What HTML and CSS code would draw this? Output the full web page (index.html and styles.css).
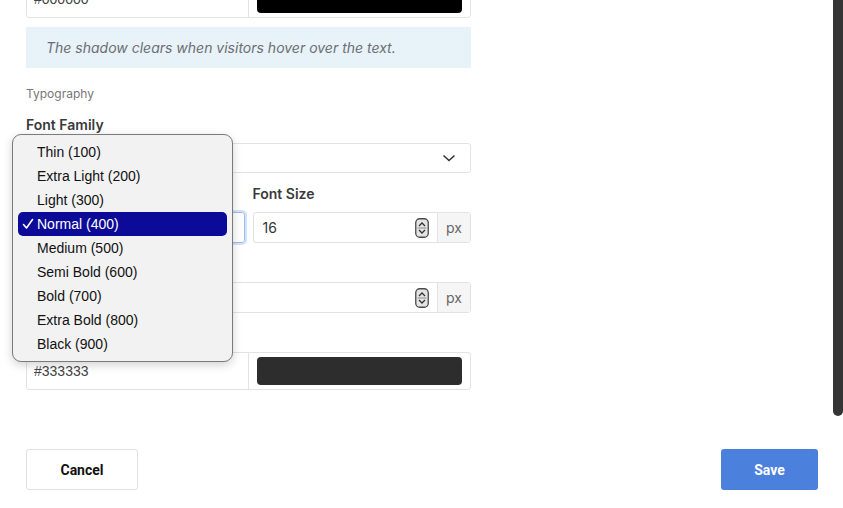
FILE: index.html
```html
<!DOCTYPE html>
<html lang="en">
<head>
  <meta charset="UTF-8" />
  <title>Text Style</title>
  <link rel="stylesheet" href="styles.css">
</head>
<body>
  <div id="panel">
    <div class="form">
      <div class="color-row first">
        <input type="text" class="color-text" value="#000000" />
        <div class="swatch-box"><div class="swatch black"></div></div>
      </div>

      <div class="info">The shadow clears when visitors hover over the text.</div>

      <div class="section-title">Typography</div>

      <label class="label family">Font Family</label>
      <div class="select">
        <span></span>
        <svg width="14" height="8" viewBox="0 0 14 8"><path d="M1.5 1.5 L7 6.5 L12.5 1.5" fill="none" stroke="#333" stroke-width="1.5"/></svg>
      </div>

      <div class="two-cols">
        <div class="col">
          <label class="label">Font Weight</label>
          <div class="select focused"><span>Normal (400)</span></div>
        </div>
        <div class="col">
          <label class="label">Font Size</label>
          <div class="number">
            <span class="value">16</span>
            <svg class="spin" width="14" height="20" viewBox="0 0 14 20"><rect x="0.75" y="0.75" width="12.5" height="18.5" rx="4" fill="#e4e4e4" stroke="#4a4a4a" stroke-width="1.3"/><path d="M4 8 L7 5 L10 8 M4 12 L7 15 L10 12" fill="none" stroke="#333" stroke-width="1.3"/><path d="M2.5 10 H11.5" stroke="#777" stroke-width="0.8"/></svg>
            <span class="unit">px</span>
          </div>
        </div>
      </div>

      <label class="label">Letter Spacing</label>
      <div class="number">
        <span class="value">0</span>
        <svg class="spin" width="14" height="20" viewBox="0 0 14 20"><rect x="0.75" y="0.75" width="12.5" height="18.5" rx="4" fill="#e4e4e4" stroke="#4a4a4a" stroke-width="1.3"/><path d="M4 8 L7 5 L10 8 M4 12 L7 15 L10 12" fill="none" stroke="#333" stroke-width="1.3"/><path d="M2.5 10 H11.5" stroke="#777" stroke-width="0.8"/></svg>
        <span class="unit">px</span>
      </div>

      <label class="label">Text Color</label>
      <div class="color-row">
        <input type="text" class="color-text" value="#333333" />
        <div class="swatch-box"><div class="swatch dark"></div></div>
      </div>

      <div class="actions">
        <button class="btn cancel">Cancel</button>
        <button class="btn save">Save</button>
      </div>
    </div>

    <!-- menu ouvert du select Font Weight -->
    <ul class="menu">
      <li>Thin (100)</li>
      <li>Extra Light (200)</li>
      <li>Light (300)</li>
      <li class="selected"><svg class="check" width="12" height="12" viewBox="0 0 12 12"><path d="M1.5 6.5 L4.5 10 L10.5 1.5" fill="none" stroke="white" stroke-width="1.6" stroke-linecap="round" stroke-linejoin="round"/></svg>Normal (400)</li>
      <li>Medium (500)</li>
      <li>Semi Bold (600)</li>
      <li>Bold (700)</li>
      <li>Extra Bold (800)</li>
      <li>Black (900)</li>
    </ul>

    <div class="scroll-thumb"></div>
  </div>
</body>
</html>
```

FILE: styles.css
```css
body {
  margin: 0;
  background: white;
  font-family: Inter, "Noto Sans", sans-serif;
  color: #333;
  overflow: hidden;
}

#panel {
  position: relative;
  display: flow-root;
  width: 843px;
  height: 508px;
  overflow: hidden;
}

.form {
  width: 445px;
  padding-left: 26px;
  margin-top: -20px;
}

.color-row {
  display: flex;
  height: 38px;
  border: 1px solid #e3e3e3;
  border-radius: 3px;
  box-sizing: border-box;
}

.color-text {
  width: 222px;
  box-sizing: border-box;
  border: none;
  border-right: 1px solid #e3e3e3;
  padding: 0 7px;
  font-family: "Liberation Sans", Arial, sans-serif;
  font-size: 14px;
  color: #444;
  background: transparent;
}

.swatch-box {
  flex: 1;
  padding: 4px 8px;
}

.swatch {
  height: 100%;
  border-radius: 4px;
}

.swatch.black {
  background: #000;
}

.swatch.dark {
  background: #2d2d2d;
}

.info {
  margin-top: 9px;
  height: 41px;
  background: #e8f2f9;
  color: #6b6f73;
  font-style: italic;
  font-size: 14px;
  padding-left: 20px;
  display: flex;
  align-items: center;
}

.section-title {
  margin-top: 18px;
  font-size: 12px;
  color: #777;
  line-height: 15px;
}

.label {
  display: block;
  font-weight: 600;
  font-size: 14px;
  line-height: 18px;
  color: #3a3a3a;
  margin-top: 12px;
  margin-bottom: 9px;
}

.label.family {
  margin-top: 15px;
}

.select {
  height: 30px;
  border: 1px solid #e3e3e3;
  border-radius: 3px;
  box-sizing: border-box;
  display: flex;
  align-items: center;
  justify-content: space-between;
  padding: 0 14px 0 10px;
  font-size: 14px;
}

.select.focused {
  height: 31px;
  border-color: #9bbcf0;
  box-shadow: 0 0 0 2px #d4e2fa;
}

.two-cols {
  display: grid;
  grid-template-columns: 1fr 1fr;
  gap: 8px;
}

.number {
  display: flex;
  align-items: center;
  height: 31px;
  border: 1px solid #e3e3e3;
  border-radius: 3px;
  box-sizing: border-box;
  font-size: 14px;
}

.number .value {
  flex: 1;
  padding-left: 9px;
  color: #333;
}

.spin {
  margin-right: 8px;
}

.unit {
  width: 32px;
  height: 100%;
  display: flex;
  align-items: center;
  justify-content: center;
  background: #f5f5f5;
  border-left: 1px solid #e3e3e3;
  color: #666;
}

.actions {
  display: flex;
  justify-content: space-between;
  width: 792px;
  margin-top: 59px;
}

.btn {
  height: 41px;
  font-family: Roboto, sans-serif;
  font-weight: bold;
  font-size: 14px;
  border-radius: 3px;
  cursor: pointer;
}

.cancel {
  width: 112px;
  background: white;
  border: 1px solid #e0e0e0;
  color: #111;
}

.save {
  width: 97px;
  background: #4b80dc;
  border: none;
  color: white;
}

.menu {
  position: absolute;
  left: 12px;
  top: 134px;
  width: 221px;
  box-sizing: border-box;
  margin: 0;
  padding: 5px 5px;
  list-style: none;
  background: #f2f2f2;
  border: 1px solid #7a7a7a;
  border-radius: 9px;
  box-shadow: 0 3px 10px rgba(0,0,0,0.18);
  font-family: "Liberation Sans", Arial, sans-serif;
  font-size: 14px;
  color: #111;
}

.menu li {
  height: 24px;
  line-height: 24px;
  padding-left: 19px;
  border-radius: 5px;
  position: relative;
}

.menu li.selected {
  background: #0c0a98;
  color: white;
}

.check {
  position: absolute;
  left: 4px;
  top: 6px;
}

.scroll-thumb {
  position: absolute;
  right: 0;
  top: 0;
  width: 10px;
  height: 416px;
  background: #353535;
  border-radius: 0 0 5px 5px;
}
```
